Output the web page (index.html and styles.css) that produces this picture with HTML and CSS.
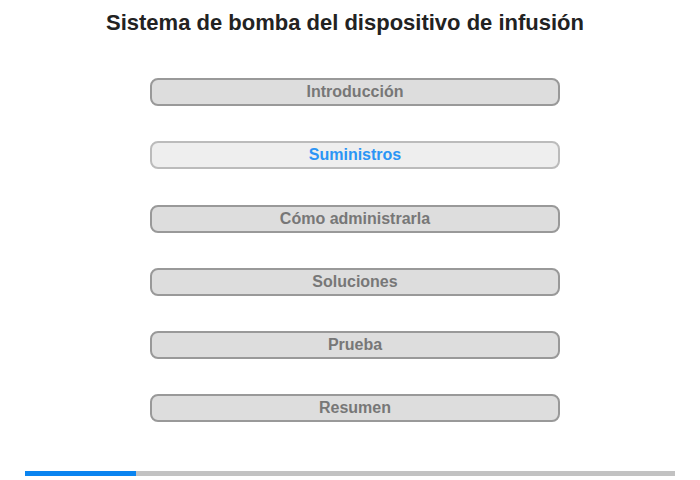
FILE: index.html
```html
<!DOCTYPE html>
<html>
<head>
    <title>Sistema de bomba del dispositivo de infusión</title>
    <link rel="stylesheet" href="styles.css">
</head>
<body>
    <!-- the title -->
    <h1 class="title">Sistema de bomba del dispositivo de infusión</h1>

    <!-- the menu of sections -->
    <div class="menu">
        <a class="item" href="#">Introducción</a>
        <a class="item active" href="#">Suministros</a>
        <a class="item" href="#">Cómo administrarla</a>
        <a class="item" href="#">Soluciones</a>
        <a class="item" href="#">Prueba</a>
        <a class="item" href="#">Resumen</a>
    </div>

    <!-- the progress bar -->
    <div class="progress">
        <div class="done" style="width: 17%;"></div>
    </div>
</body>
</html>
```

FILE: styles.css
```css
/* The page itself */
body {
    font-family: "Liberation Sans", Arial, sans-serif;
    background: white;
    margin: 0;
    padding: 0;
}

/* The title at the top */
.title {
    font-size: 22px;
    line-height: 25px;
    color: #222;
    text-align: center;
    margin: 0;
    padding-top: 10px;
    padding-right: 10px;
}

/* The menu of sections */
.menu {
    display: flex;
    flex-direction: column;
    gap: 35.3px;
    width: 410px;
    margin: 43px 0 0 150px;
}

.item {
    display: block;
    box-sizing: border-box;
    height: 28px;
    line-height: 24px;
    border: 2px solid #999;
    border-radius: 8px;
    background-color: #ddd;
    color: #777;
    font-size: 16px;
    font-weight: bold;
    text-align: center;
    text-decoration: none;
}

/* The section that is open now */
.item.active {
    background-color: #eee;
    border-color: #bbb;
    color: #2b95f5;
}

/* The progress bar */
.progress {
    height: 5px;
    margin: 49px 25px 0 25px;
    background-color: #c2c2c2;
}

.done {
    height: 100%;
    background-color: #0a84f0;
}
```
